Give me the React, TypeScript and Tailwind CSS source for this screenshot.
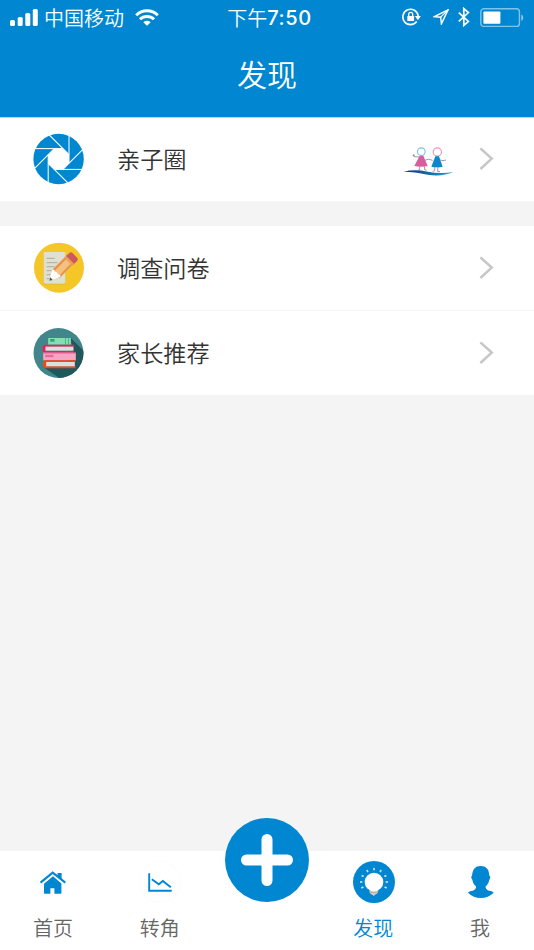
import type { ReactNode } from "react";

/* ================= STATUS BAR ICONS ================= */

const SignalIcon = () => (
	<svg className="w-7 h-[18px]" viewBox="0 0 28 18" fill="white">
		<rect x="0" y="12" width="5" height="6" rx="1.6" />
		<rect x="7.7" y="9" width="5" height="9" rx="1.6" />
		<rect x="15.3" y="5" width="5" height="13" rx="1.6" />
		<rect x="22.8" y="1" width="5" height="17" rx="1.6" />
	</svg>
);

const WifiIcon = () => (
	<svg className="w-6 h-[17px]" viewBox="0 0 24 17" fill="none" stroke="white" strokeWidth="3">
		<path d="M1.2 6.2a15.4 15.4 0 0 1 21.6 0" />
		<path d="M5 10.3a10 10 0 0 1 14 0" />
		<path d="M12 16.8 8.3 13.2a5.4 5.4 0 0 1 7.4 0Z" fill="white" stroke="none" />
	</svg>
);

const RotationLockIcon = () => (
	<svg className="w-[19px] h-[18px]" viewBox="0 0 19 18" fill="none" stroke="white" strokeWidth="1.6">
		<path d="M14.7 13.6A7.7 7.7 0 1 1 16.2 8" />
		<path d="M12.9 8h6l-3 4.2Z" fill="white" stroke="none" />
		<rect x="5.3" y="8" width="6.8" height="5" rx=".5" fill="white" stroke="none" />
		<path d="M6.7 8.5V6.4a2 2 0 0 1 4 0v2.1" strokeWidth="1.3" />
	</svg>
);

const LocationIcon = () => (
	<svg className="w-4 h-4" viewBox="0 0 16 16" fill="none" stroke="white" strokeWidth="1.4">
		<path d="M15 .9 1.5 7.6l6.2.6.7 6.7Z" />
		<path d="M15 .9 7.7 8.2" strokeWidth="1.2" />
	</svg>
);

const BluetoothIcon = () => (
	<svg className="w-3 h-5" viewBox="0 0 12 20" fill="none" stroke="white" strokeWidth="1.7">
		<path d="m.8 5.6 9.6 8.8-4.6 4V1.6l4.6 4L.8 14.4" />
	</svg>
);

const BatteryIcon = () => (
	<svg className="w-11 h-[19px]" viewBox="0 0 44 19">
		<rect x=".8" y=".8" width="38.6" height="17.6" rx="3" fill="none" stroke="white" strokeOpacity=".5" strokeWidth="1.4" />
		<rect x="3.4" y="3.4" width="17" height="12.4" rx=".8" fill="white" />
		<path d="M41.3 6.4c2.6 1 2.6 5.4 0 6.4Z" fill="white" fillOpacity=".55" />
	</svg>
);

/* ================= LIST ICONS ================= */

const ANGLES = [0, 45, 90, 135, 180, 225, 270, 315];

const ApertureIcon = () => (
	<svg className="w-[52px] h-[52px]" viewBox="-25.6 -26 52 52">
		<circle r="25.2" fill="#0187d1" />
		<path d="m-4.3-10.4h8.6l6.1 6.1v8.6l-6.1 6.1h-8.6l-6.1-6.1v-8.6Z" fill="white" />
		{ANGLES.map((a) => (
			<path key={a} d="M-26-10.4H4.3" transform={`rotate(${a})`} stroke="white" strokeWidth="1.05" />
		))}
	</svg>
);

const SurveyIcon = () => (
	<svg className="w-[52px] h-[52px]" viewBox="39 36 156 156">
		<circle cx="117" cy="113" r="75" fill="#f5c628" />
		<rect x="71" y="68" width="65" height="95" rx="4" fill="#c9ad45" />
		<rect x="71" y="66" width="65" height="95" rx="4" fill="#e0e0d0" />
		<path d="M80 85h24M80 98h32M80 110h24M80 122h16M80 134h11M80 146h9" stroke="#b5b6ab" strokeWidth="4" />
		<path d="m90 151 7-32 42-42 23 23-43 44Z" fill="#f3c27c" />
		<path d="m112 143 41-43 9 0-43 44Z" fill="#e7934f" />
		<path d="m97 119 42-42 5 5-41 42Z" fill="#e7934f" />
		<path d="m137 79 12-11q4-3 8 0l15 16q3 4 0 8l-12 12Z" fill="#cc595d" />
		<path d="m133 83 5-6 25 25-6 6Z" fill="#eb9f5a" />
		<path d="m89 152 7-33q7-2 9 6 8 0 8 8 10 0 8 8Z" fill="white" />
		<path d="m88 152 3-10 7 8Z" fill="#465066" />
	</svg>
);

const BooksIcon = () => (
	<svg className="w-[52px] h-[52px]" viewBox="38.5 36 156 156">
		<defs>
			<clipPath id="booksClip">
				<circle cx="115" cy="114" r="75" />
			</clipPath>
		</defs>
		<g clipPath="url(#booksClip)">
			<rect x="38" y="36" width="156" height="156" fill="#40868a" />
			<path d="m152 69 50 50v80h-70l-62-42 90-25Z" fill="#20575a" />
		</g>
		<rect x="84" y="69" width="68" height="20" fill="#83dfb0" />
		<path d="M90 76h13" stroke="#28aa75" strokeWidth="8" />
		<path d="M136 69v20M145 69v20" stroke="#49b986" strokeWidth="3" />
		<path d="M162 89H73q-6 0-6 12t6 12h89v-6H76V95h86Z" fill="#ef1d5c" />
		<rect x="76" y="95" width="84" height="12" fill="#dedede" />
		<rect x="69" y="113" width="98" height="23" fill="#f8a4c4" />
		<path d="M69 115h98" stroke="#ee77a6" strokeWidth="3" />
		<path d="M75 123h25" stroke="#ec69a0" strokeWidth="7" />
		<path d="M166 136H75q-6 0-6 12t6 12h91v-6H78v-13h88Z" fill="#fb4613" />
		<rect x="78" y="141" width="86" height="13" fill="#dedede" />
	</svg>
);

const KidsIcon = () => (
	<svg className="w-[54px] h-9" viewBox="36 33 162 108" fill="none">
		<defs>
			<linearGradient id="swoosh" x1="0" x2="1">
				<stop offset="0" stopColor="#252a7c" />
				<stop offset=".6" stopColor="#087cae" />
				<stop offset="1" stopColor="#43a8c8" />
			</linearGradient>
		</defs>
		<g stroke="#8d8290" strokeWidth="2.5">
			<path d="m87 81-14-1-3-4M104 91q12-7 24 0M151 90l8 2 9-2M89 109v10l-6 2M103 109l1 10 6 2M135 110l-1 12-6 2M144 110l-1 14 7 1" />
			<circle cx="71" cy="76" r="2" />
		</g>
		<circle cx="94" cy="65" r="11.5" stroke="#75c2e7" strokeWidth="3.4" />
		<circle cx="142" cy="66" r="12.5" stroke="#f391bb" strokeWidth="3.4" />
		<path d="M89 77h11l13 31q-20 5-40 0Z" fill="#d95c9f" />
		<path d="M136 79h11l11 31q-16 4-34 0Z" fill="#0d87cc" />
		<path d="M41 125q33-8 72 0 38 8 77 1-34 15-77 8-40-9-72-9Z" fill="url(#swoosh)" />
	</svg>
);

const ChevronIcon = () => (
	<svg className="w-[18px] h-[26px]" viewBox="0 0 18 26" fill="none" stroke="#c7c7c7" strokeWidth="2.6">
		<path d="m2.4 2.4 11.3 10.2L2.4 23" />
	</svg>
);

/* ================= TAB ICONS ================= */

const HomeIcon = () => (
	<svg className="w-[42px] h-[42px]" viewBox="0 0 42 42" fill="#0187d1">
		<path d="m21 15.2-9 7.6V32q0 .8.8.8h5.6v-5.6h4v5.6h6.2q.8 0 .8-.8v-9.4Z" />
		<path d="m8.5 21.6 12.2-9.9 12.6 9.9" fill="none" stroke="#0187d1" strokeWidth="2.1" />
		<path d="M25.6 11.9h4v7l-4-3.4Z" />
	</svg>
);

const ChartIcon = () => (
	<svg className="w-[42px] h-[42px]" viewBox="0 0 42 42" fill="none" stroke="#0187d1">
		<circle cx="21" cy="21" r="20.4" stroke="#fcfcfc" />
		<path d="M10.2 12.2v17.6h22.5" strokeWidth="1.9" />
		<path d="m12.8 18.2 7 5 4-3.3 8 6.3" strokeWidth="1.9" />
	</svg>
);

const BulbIcon = () => (
	<svg className="w-[42px] h-[42px]" viewBox="69 63 126 126">
		<circle cx="132" cy="126" r="63" fill="#0187d1" />
		<path d="M118 151h27q-1 11-10 13l-4 4-4-4q-9-2-9-13Z" fill="#d9d2c3" />
		<path d="M117 155q15 7 29-1" stroke="#8d9896" strokeWidth="2" fill="none" />
		<circle cx="132" cy="126" r="28" fill="white" />
		<g stroke="#d7dfdf" strokeWidth="5">
			{[-115, -90, -62, -31, 0, 31, 62, 90, 115].map((a) => (
				<path key={a} d="M132 91v-7" transform={`rotate(${a} 132 126)`} />
			))}
		</g>
	</svg>
);

const UserIcon = () => (
	<svg className="w-[42px] h-[42px]" viewBox="389 63 126 126" fill="#0187d1">
		<path d="M451 78c17 0 25 10 26 29 4 1 4 7 0 12-2 12-7 16-11 20-1 7 3 11 10 13 8 1 12 3 14 6-20 21-57 21-77 0 2-4 7-5 14-6 7-2 11-6 10-13-5-4-9-9-11-20-4-5-4-11-1-12 2-19 9-29 26-29Z" />
	</svg>
);

/* ================= LAYOUT PARTS ================= */

type ListRowProps = { icon: ReactNode; label: string; extra?: ReactNode };

const ListRow = ({ icon, label, extra }: ListRowProps) => (
	<li className="h-[84px] bg-white flex items-center pl-[33px] pr-[38px]">
		{icon}
		<span className="flex-1 pl-8 text-[23.2px] leading-none text-[#333]">{label}</span>
		{extra}
		<span className="ml-[22px]">
			<ChevronIcon />
		</span>
	</li>
);

type TabProps = { icon: ReactNode; label: string; active?: boolean };

const Tab = ({ icon, label, active }: TabProps) => (
	<button className="flex-1 flex flex-col items-center pt-[10px]">
		{icon}
		<span className={`mt-[15px] pr-px text-[20px] leading-5 ${active ? "text-[#0187d1]" : "text-[#666]"}`}>
			{label}
		</span>
	</button>
);

const App = () => {
	return (
		<div className="w-[534px] h-[950px] flex flex-col bg-[#f4f4f4] overflow-hidden font-['Noto_Sans_CJK_SC',sans-serif] font-[350]">
			{/* Header */}
			<header className="h-[117px] bg-[#0187d1] text-white">
				<div className="h-[34px] grid grid-cols-[1fr_auto_1fr] items-center pl-[10px] pr-[10px] text-[20px] leading-none">
					<div className="flex items-center">
						<SignalIcon />
						<span className="ml-[6px] mr-[11px] pt-px">中国移动</span>
						<WifiIcon />
					</div>
					<div className="flex items-center pt-px pl-[5px]">
						下午<span className="font-['Inter',sans-serif] font-medium text-[20px] tracking-[0.6px]">7:50</span>
					</div>
					<div className="flex items-center justify-end">
						<RotationLockIcon />
						<span className="ml-3"><LocationIcon /></span>
						<span className="ml-[9px] mr-[10px]"><BluetoothIcon /></span>
						<BatteryIcon />
					</div>
				</div>
				<h1 className="pt-6 text-center text-[30px] leading-[30px]">发现</h1>
			</header>

			{/* Content */}
			<main className="flex-1">
				<ul className="border-t border-[#b3dbf1] bg-white h-[84px] overflow-hidden">
					<div className="-mt-px">
						<ListRow icon={<ApertureIcon />} label="亲子圈" extra={<KidsIcon />} />
					</div>
				</ul>
				<ul className="mt-[25px] flex flex-col gap-px">
					<ListRow icon={<SurveyIcon />} label="调查问卷" />
					<ListRow icon={<BooksIcon />} label="家长推荐" />
				</ul>
			</main>

			{/* Bottom tabs */}
			<nav className="h-[99px] bg-white flex">
				<Tab icon={<HomeIcon />} label="首页" />
				<Tab icon={<ChartIcon />} label="转角" />
				<div className="flex-1 flex justify-center">
					<button className="-mt-[33px] w-[84px] h-[84px] shrink-0 rounded-full bg-[#0187d1]">
						<svg className="w-full h-full" viewBox="0 0 84 84" stroke="#fcfdff" strokeWidth="11" strokeLinecap="round">
							<path d="M42 21.5v41M21.5 42h41" />
						</svg>
					</button>
				</div>
				<Tab icon={<BulbIcon />} label="发现" active />
				<Tab icon={<UserIcon />} label="我" />
			</nav>
		</div>
	);
};

export default App;
